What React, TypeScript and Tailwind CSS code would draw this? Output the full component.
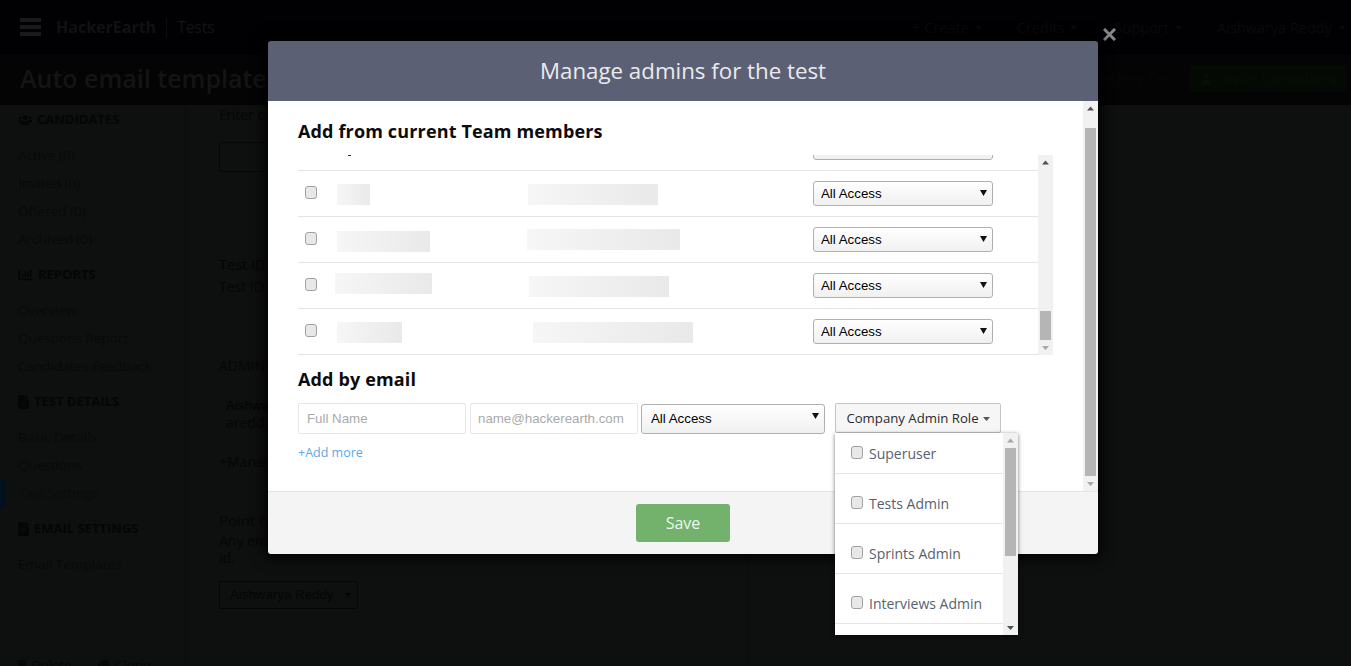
import { FaChartBar, FaFileAlt, FaTrash, FaClone, FaUser, FaUsers } from "react-icons/fa";
import { ReactNode } from "react";

const sans = "font-['Open_Sans',sans-serif]";
const arial = "font-['Liberation_Sans',Arial,sans-serif]";

const SideHead = ({ icon, label, className }: { icon: ReactNode; label: string; className: string }) => (
  <div className={`flex items-center gap-[5px] h-[20px] pl-[18px] text-[13px] font-bold text-[#050505] ${className}`}>
    {icon}
    <span>{label}</span>
  </div>
);

const SideItem = ({ label, active }: { label: string; active?: boolean }) => (
  <div
    className={`h-[28px] leading-[28px] text-[13.500px] whitespace-nowrap ${
      active ? "pl-[13px] border-l-[5px] border-[#01101c] text-[#050c12]" : "pl-[18px] text-[#080909]"
    }`}
  >
    {label}
  </div>
);

const Caret = ({ className, fill }: { className: string; fill: string }) => (
  <svg width="7" height="4" viewBox="0 0 7 4" className={className}>
    <path d="M0 0h7L3.500 4z" fill={fill} />
  </svg>
);

const Arrow = ({ down, light }: { down?: boolean; light?: boolean }) => (
  <svg width="15" height="15" viewBox="0 0 15 15" className="shrink-0">
    <path d={down ? "M4 6h7l-3.5 4z" : "M4 9.500h7l-3.500-4z"} fill={light ? "#a8a8a8" : "#505050"} />
  </svg>
);

const Select = ({ className, pad }: { className: string; pad: string }) => (
  <div className={`relative shrink-0 ${className}`}>
    <select className={`appearance-none block w-full h-full text-[13.3px] text-black border border-[#b0b0b0] rounded-[3px] bg-gradient-to-b from-white to-[#f0f0f0] ${pad} ${arial}`}>
      <option>All Access</option>
    </select>
    <svg width="7" height="6" viewBox="0 0 7 6" className="absolute right-[6px] top-[9px]">
      <path d="M0 0h7L3.500 6z" fill="#111" />
    </svg>
  </div>
);

const Check = () => (
  <input
    type="checkbox"
    className="appearance-none block shrink-0 w-[12px] h-[13px] rounded-[3px] border border-[#a0a0a0] bg-[#e8e8e8]"
  />
);

const Blur = ({ className }: { className: string }) => (
  <div className={`shrink-0 h-[21px] bg-gradient-to-r from-[#f6f6f6] to-[#e9e9ea] ${className}`} />
);

const members = [
  { name: "w-[33px] ml-[20px] mt-[2px]", gap: "ml-[158px]", email: "w-[130px] mt-[2px]", selectGap: "ml-[155px]" },
  { name: "w-[93px] ml-[20px] mt-[4px]", gap: "ml-[97px]", email: "w-[153px]", selectGap: "ml-[133px]" },
  { name: "w-[97px] ml-[18px] -mt-[4px]", gap: "ml-[97px]", email: "w-[140px] mt-[2px]", selectGap: "ml-[144px]" },
  { name: "w-[65px] ml-[20px] mt-[2px]", gap: "ml-[131px]", email: "w-[160px] mt-[2px]", selectGap: "ml-[120px]" },
];

const roles = [
  { label: "Superuser", row: "h-[41px] pt-[13px]" },
  { label: "Tests Admin", row: "h-[50px] pt-[22px]" },
  { label: "Sprints Admin", row: "h-[50px] pt-[22px]" },
  { label: "Interviews Admin", row: "h-[50px] pt-[22px]" },
];

export default function App() {
  return (
    <div className={`relative h-[666px] overflow-hidden bg-[#0e0f0f] ${sans}`}>
      {/* page behind the overlay */}
      <header className="flex items-center h-[55px] bg-[#010103] pl-[20px] pr-[5px]">
        <div className="flex flex-col gap-[3px] w-[21px] -mt-[1px]">
          <div className="h-[4px] bg-[#1a1a1a]" />
          <div className="h-[4px] bg-[#1a1a1a]" />
          <div className="h-[4px] bg-[#1a1a1a]" />
        </div>
        <span className="ml-[15px] text-[16px] font-bold text-[#111111] -mt-[1px]">HackerEarth</span>
        <div className="ml-[10px] w-[1px] h-[20px] bg-[#0c0c0c]" />
        <span className="ml-[10px] text-[15.500px] text-[#131313]">Tests</span>
        <div className="ml-auto flex items-center text-[14.500px] text-[#09090e]">
          <span>+ Create</span>
          <Caret className="ml-[6px]" fill="#09090e" />
          <span className="ml-[35px]">Credits</span>
          <Caret className="ml-[5px]" fill="#09090e" />
          <span className="ml-[38px]">Support</span>
          <Caret className="ml-[6px]" fill="#09090e" />
          <span className="ml-[35px]">Aishwarya Reddy</span>
          <Caret className="ml-[7px]" fill="#09090e" />
        </div>
      </header>
      <div className="flex items-center h-[50px] bg-[#040404] pl-[20px] pr-[5px] pb-[3px]">
        <h1 className="text-[25px] font-semibold text-[#141414] whitespace-nowrap">Auto email template</h1>
        <span className="ml-auto text-[14.500px] text-[#07070b]">Preview Test</span>
        <div className="ml-[15px] flex items-center gap-[8px] w-[156px] h-[27px] pl-[10px] bg-[#040904] text-[14.500px] text-[#070e07] rounded-[2px]">
          <FaUser className="w-[12px] h-[12px]" />
          <span>Invite Candidates</span>
        </div>
      </div>
      <div className="flex h-[561px]">
        <aside className="w-[186px] shrink-0 pt-[5px] border-r border-[#0a0b0b]">
          <SideHead icon={<FaUsers className="w-[14px] h-[14px]" />} label="CANDIDATES" className="mb-[11px]" />
          {["Active (0)", "Invited (0)", "Offered (0)", "Archived (0)"].map((s) => <SideItem key={s} label={s} />)}
          <SideHead icon={<FaChartBar className="w-[15px] h-[14px]" />} label="REPORTS" className="mt-[12px] mb-[11px]" />
          {["Overview", "Questions Report", "Candidates Feedback"].map((s) => <SideItem key={s} label={s} />)}
          <SideHead icon={<FaFileAlt className="w-[11px] h-[14px]" />} label="TEST DETAILS" className="mt-[12px] mb-[11px]" />
          <SideItem label="Basic Details" />
          <SideItem label="Questions" />
          <SideItem label="Test Settings" active />
          <SideHead icon={<FaFileAlt className="w-[11px] h-[14px]" />} label="EMAIL SETTINGS" className="mt-[12px] mb-[11px]" />
          <SideItem label="Email Templates" />
          <div className="mt-[77px] flex gap-[26px] pl-[17px] text-[13.500px] text-[#060606]">
            <span className="flex items-center gap-[4px]"><FaTrash className="w-[10px] h-[10px]" />Delete</span>
            <span className="flex items-center gap-[6px]"><FaClone className="w-[11px] h-[11px]" />Clone</span>
          </div>
        </aside>
        <main className="w-[563px] pl-[33px] -mt-[1px] border-r border-[#0a0b0b] text-[14px] text-[#060606]">
          <p className="h-[20px]">Enter company</p>
          <div className="mt-[18px] w-[300px] h-[30px] border border-[#060606] rounded-[2px]" />
          <p className="mt-[82px] text-[14.500px] text-[#040404]">Test ID</p>
          <p>Test ID for</p>
          <p className="mt-[58px]">ADMINS</p>
          <p className={`mt-[20px] pl-[7px] text-[13.300px] text-[#030303] ${arial}`}>Aishwarya</p>
          <p className="pl-[7px] -mt-[2px] leading-[18px]">areddy</p>
          <p className="mt-[19px]">+Manage</p>
          <p className="mt-[37px] text-[15px]">Point of</p>
          <p className="mt-[1px] leading-[17px]">Any email<br />id.</p>
          <div className={`mt-[15px] flex items-center w-[139px] h-[28px] border border-[#060606] rounded-[2px] pl-[10px] pr-[6px] text-[13.300px] text-[#050505] ${arial}`}>
            <span>Aishwarya Reddy</span>
            <svg width="6" height="5" viewBox="0 0 6 5" className="ml-auto"><path d="M0 0h6L3 5z" fill="#050505" /></svg>
          </div>
        </main>
      </div>

      {/* close button */}
      <svg width="13" height="13" viewBox="0 0 13 13" className="absolute left-[1103px] top-[28px]">
        <path d="M1 1l11 11M12 1L1 12" stroke="#8a8a8a" strokeWidth="3" />
      </svg>

      {/* modal */}
      <div className="absolute left-[268px] top-[41px] w-[830px] h-[513px] flex flex-col rounded-[3px] shadow-[0_0_14px_4px_rgba(0,0,0,0.85)]">
        <div className="h-[60px] shrink-0 flex items-center justify-center rounded-t-[3px] bg-[#5c6074] text-[22.300px] text-[#eaeaee]">
          Manage admins for the test
        </div>
        <div className="h-[390px] shrink-0 flex bg-white">
          <div className="w-[815px] pl-[30px]">
            <h3 className="pt-[18px] h-[54px] text-[18px] leading-[25px] tracking-[0.15px] font-bold text-[#0c0c0c]">Add from current Team members</h3>
            <div className="flex w-[755px] h-[200px] overflow-hidden">
              <div className="w-[740px] overflow-hidden">
                <div className="-mt-[30px]">
                  <div className="relative flex items-center h-[46px] border-b border-[#e4e4e4]">
                    <Select className="ml-[515px] w-[180px] h-[25px]" pad="pl-[7px]" />
                    <div className="absolute left-[50px] top-[30px] w-[3px] h-[1px] bg-[#333]" />
                  </div>
                  {members.map((m) => (
                    <div key={m.name} className="flex items-center h-[46px] border-b border-[#e4e4e4]">
                      <div className="ml-[7px] -mt-[3px]"><Check /></div>
                      <Blur className={m.name} />
                      <Blur className={`${m.gap} ${m.email}`} />
                      <Select className={`${m.selectGap} w-[180px] h-[25px]`} pad="pl-[7px]" />
                    </div>
                  ))}
                </div>
              </div>
              <div className="w-[15px] h-[200px] flex flex-col bg-[#f1f1f1]">
                <Arrow />
                <div className="ml-[2px] mt-[141px] w-[11px] h-[30px] bg-[#b5b5b5]" />
                <div className="mt-auto"><Arrow down light /></div>
              </div>
            </div>
            <h3 className="mt-[12px] h-[25px] text-[18px] leading-[25px] tracking-[0.15px] font-bold text-[#0c0c0c]">Add by email</h3>
            <div className={`mt-[11px] flex items-start ${arial} text-[13.300px]`}>
              <input placeholder="Full Name" className="w-[168px] h-[31px] px-[8px] border border-[#e6e6e6] rounded-[2px] placeholder:text-[#aaaaaa]" />
              <input placeholder="name@hackerearth.com" className="ml-[4px] w-[168px] h-[31px] pl-[7px] pr-[4px] border border-[#e6e6e6] rounded-[2px] placeholder:text-[#aaaaaa]" />
              <Select className="ml-[3px] mt-[1px] w-[184px] h-[30px]" pad="pl-[9px]" />
              <div className="relative ml-[10px] w-[166px]">
                <button className={`w-full h-[30px] pt-[1px] flex items-center justify-center gap-[4px] border border-[#c4c4c4] rounded-[2px] bg-[#f6f6f6] text-[13.200px] text-[#2a2a2a] ${sans}`}>
                  Company Admin Role
                  <svg width="7" height="4" viewBox="0 0 7 4"><path d="M0 0h7L3.500 4z" fill="#555" /></svg>
                </button>
                <div className={`absolute left-0 top-[30px] z-10 flex w-[183px] h-[202px] bg-white shadow-[0_1px_4px_rgba(0,0,0,0.55)] ${sans}`}>
                  <div className="w-[168px] shrink-0">
                    {roles.map((r) => (
                      <div key={r.label} className={`flex pl-[16px] border-b border-[#e6e6e6] ${r.row}`}>
                        <Check />
                        <span className="ml-[6px] -mt-[2px] text-[14px] leading-[20px] text-[#56616f]">{r.label}</span>
                      </div>
                    ))}
                  </div>
                  <div className="w-[15px] flex flex-col bg-[#f1f1f1]">
                    <Arrow light />
                    <div className="mx-[2px] w-[11px] h-[108px] bg-[#b5b5b5]" />
                    <div className="mt-auto"><Arrow down /></div>
                  </div>
                </div>
              </div>
            </div>
            <a className="block mt-[10px] text-[12.500px] leading-[18px] text-[#5ca8e8]">+Add more</a>
          </div>
          <div className="w-[15px] flex flex-col bg-[#f1f1f1]">
            <Arrow />
            <div className="ml-[2px] mt-[12px] w-[11px] h-[349px] bg-[#b5b5b5]" />
            <div className="mt-auto"><Arrow down light /></div>
          </div>
        </div>
        <div className="flex-1 flex items-center justify-center rounded-b-[3px] bg-[#f4f4f4] border-t border-[#e4e4e4]">
          <button className="w-[94px] h-[38px] rounded-[3px] bg-[#72b26d] text-[16px] text-[#eef6ec]">Save</button>
        </div>
      </div>
    </div>
  );
}
